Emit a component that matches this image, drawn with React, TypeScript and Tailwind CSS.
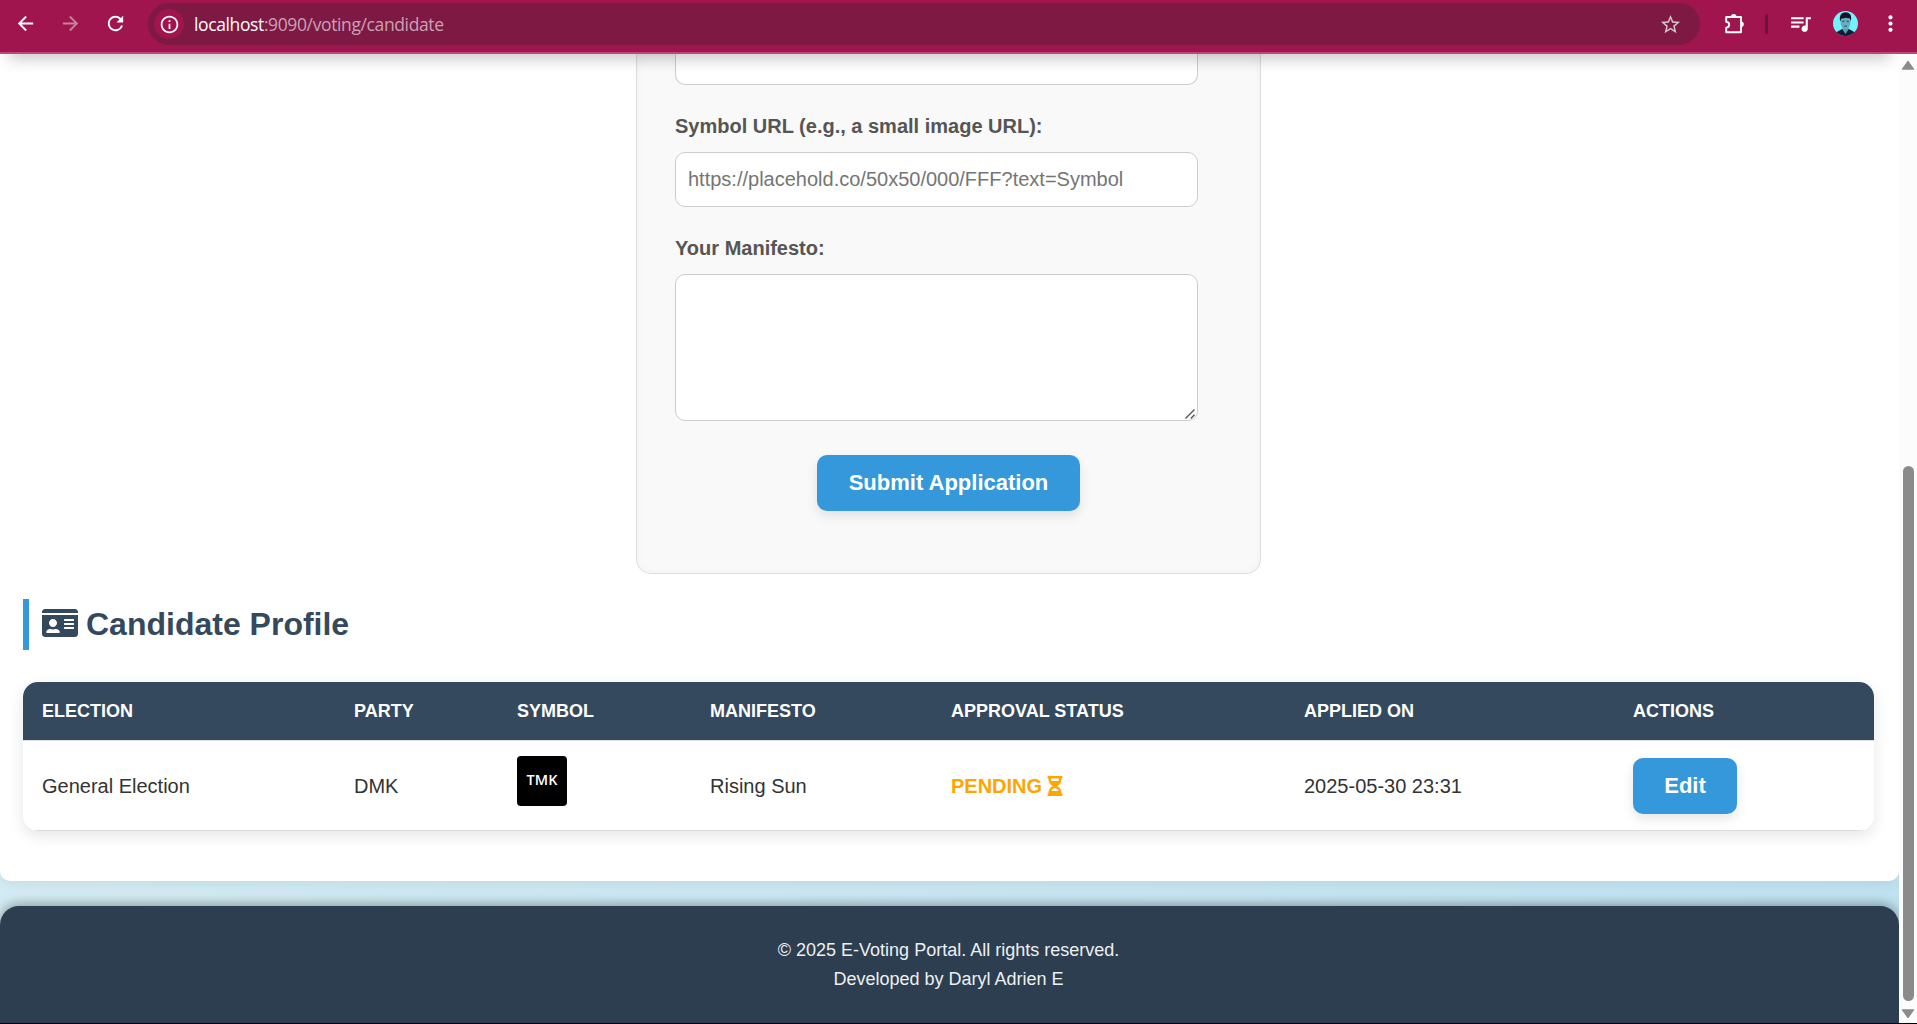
import React from "react";
import { FaHourglassHalf, FaIdCard } from "react-icons/fa";
import { MdArrowBack, MdArrowForward, MdRefresh, MdStarOutline, MdQueueMusic, MdMoreVert, MdOutlineInfo } from "react-icons/md";

const HEADERS: [string, string][] = [
  ["ELECTION", "w-[312px]"],
  ["PARTY", "w-[163px]"],
  ["SYMBOL", "w-[193px]"],
  ["MANIFESTO", "w-[241px]"],
  ["APPROVAL STATUS", "w-[353px]"],
  ["APPLIED ON", "w-[329px]"],
  ["ACTIONS", "w-[260px]"],
];

function ExtensionIcon() {
  return (
    <svg width="22" height="22" viewBox="0 0 22 22" fill="none">
      <path d="M2.2 4H17V19.2H2.2V14.6C6.2 14.2 6.2 9.2 2.2 8.8Z" stroke="white" strokeWidth="1.9" strokeLinejoin="round" />
      <path d="M6.9 3.9A2.8 2.8 0 0 1 12.5 3.9ZM17 8.4A2.8 2.8 0 0 1 17 14Z" fill="white" />
    </svg>
  );
}

function Avatar() {
  return (
    <svg width="25" height="25" viewBox="0 0 25 25">
      <defs><clipPath id="face"><circle cx="12.5" cy="12.5" r="12.5" /></clipPath></defs>
      <g clipPath="url(#face)">
        <rect width="25" height="25" fill="#72f3fb" />
        <path d="M3 25V21.5L9 18H16L22 21.5V25Z" fill="#101b35" />
        <path d="M9.5 15H15.5V18.5L12.5 23L9.5 18.5Z" fill="#5b9fb4" />
        <ellipse cx="12.5" cy="11.8" rx="4.9" ry="6.4" fill="#6aacbf" />
        <path d="M7.2 10.5C6 5 8 1.5 12.5 1.3C17.5 1.3 19 5 17.8 10.5L16.9 7.5L13 6.7L8.4 7.7Z" fill="#101426" />
        <path d="M9.2 10.3H11.4M13.6 10.3H15.8M11.2 15.2H13.8" stroke="#1d3a52" strokeWidth="0.9" />
      </g>
    </svg>
  );
}

export default function App() {
  return (
    <div className="flex h-[1024px] w-[1917px] flex-col overflow-hidden bg-black font-['Liberation_Sans',Arial,sans-serif] text-xl text-[#333]">
      <header className="flex h-[54px] shrink-0 items-start border-b-2 border-[#b84a76] bg-[#a0154e] text-white">
        <div className="flex h-[47px] w-[148px] shrink-0 items-center pl-[14px]">
          <MdArrowBack size={23} />
          <MdArrowForward size={23} className="ml-[22px] opacity-45" />
          <MdRefresh size={23} className="ml-[22px]" />
        </div>
        <div className="mt-[3px] flex h-[42px] w-[1552px] shrink-0 items-center rounded-full bg-[#7d1943] pl-[6px] pr-[18px]">
          <span className="flex size-[30px] items-center justify-center rounded-full bg-[#a0154e]"><MdOutlineInfo size={21} /></span>
          <span className="ml-[10px] font-['Open_Sans',sans-serif] text-[17.5px] tracking-[-0.38px] text-[#cba1b3]"><span className="text-white">localhost</span>:9090/voting/candidate</span>
          <MdStarOutline size={23} className="ml-auto text-[#d4c1ca]" />
        </div>
        <div className="flex h-[47px] flex-1 items-center">
          <span className="ml-[24px]"><ExtensionIcon /></span>
          <span className="ml-[19px] h-5 w-[3px] rounded bg-[#6f1239]" />
          <MdQueueMusic size={25} className="ml-[20px]" />
          <span className="ml-[20px]"><Avatar /></span>
          <MdMoreVert size={25} className="ml-[20px]" />
        </div>
      </header>

      <div className="flex h-[969px] shrink-0">
        <div className="relative flex w-[1899px] flex-col overflow-hidden bg-[linear-gradient(90deg,#d3ebf3,#bfe2f1)]">
          <main className="flex h-[827px] shrink-0 flex-col rounded-b-[10px] bg-white px-[23px] shadow-[0_4px_12px_rgba(0,0,0,0.06)]">
            <section className="ml-[613px] flex h-[520px] w-[625px] shrink-0 flex-col rounded-b-[15px] border border-t-0 border-[#ddd] bg-[#f9f9f9] pl-[38px] shadow-[inset_0_0_10px_rgba(0,0,0,0.03)]">
              <div className="h-[31px] w-[523px] rounded-b-[10px] border border-t-0 border-[#ccc] bg-white" />
              <label className="mt-[26px] h-[31px] font-bold leading-[31px] text-[#555]">Symbol URL (e.g., a small image URL):</label>
              <input className="mt-[10px] h-[55px] w-[523px] shrink-0 rounded-[10px] border border-[#ccc] bg-white px-[12px] placeholder:text-[#757575]" placeholder="https://placehold.co/50x50/000/FFF?text=Symbol" />
              <label className="mt-[26px] h-[31px] font-bold leading-[31px] text-[#555]">Your Manifesto:</label>
              <div className="mt-[10px] flex h-[147px] w-[523px] shrink-0 items-end justify-end rounded-[10px] border border-[#ccc] bg-white pb-px pr-[2px]">
                <svg width="10" height="10" viewBox="0 0 10 10" stroke="#555" strokeWidth="1.4"><path d="M.5 9.5L9.5.5M5.8 9.5L9.5 5.8" /></svg>
              </div>
              <button className="ml-[142px] mt-[34px] h-[56px] w-[263px] shrink-0 rounded-[10px] bg-[#3498db] text-[22px] font-bold text-white shadow-[0_5px_12px_rgba(0,0,0,0.1)]">Submit Application</button>
            </section>
            <h2 className="mt-[25px] flex h-[51px] shrink-0 items-center border-l-[6px] border-[#3498db] pl-[13px] text-[32px] font-bold text-[#34495e]">
              <FaIdCard size={36} className="mb-1 mr-[8px]" />Candidate Profile
            </h2>
            <div className="mt-[32px] h-[149px] w-[1851px] shrink-0 overflow-hidden rounded-[15px] bg-white shadow-[0_5px_15px_rgba(0,0,0,0.1)]">
              <table className="w-full table-fixed border-collapse text-left">
                <thead>
                  <tr className="h-[58px] border-b border-[#ddd] bg-[#34495e] text-[18px] text-white">
                    {HEADERS.map(([h, w]) => <th key={h} className={`${w} pl-[19px] pt-[2px] font-bold`}>{h}</th>)}
                  </tr>
                </thead>
                <tbody>
                  <tr className="h-[90px] border-b border-[#ddd] *:pl-[19px] *:pt-[2px]">
                    <td>General Election</td>
                    <td>DMK</td>
                    <td><span className="mb-[11px] flex size-[50px] items-center justify-center rounded bg-black font-['Open_Sans',sans-serif] text-[14.5px] font-semibold text-white">TMK</span></td>
                    <td>Rising Sun</td>
                    <td><span className="flex items-center font-bold text-[#ffa500]">PENDING<FaHourglassHalf size={20} className="ml-[3px]" /></span></td>
                    <td>2025-05-30 23:31</td>
                    <td><button className="block h-[56px] w-[104px] rounded-[10px] bg-[#3498db] text-[22px] font-bold text-white shadow-[0_5px_12px_rgba(0,0,0,0.1)]">Edit</button></td>
                  </tr>
                </tbody>
              </table>
            </div>
          </main>
          <footer className="mt-[25px] h-[117px] shrink-0 rounded-t-[19px] bg-[#2c3e50] pr-[2px] pt-[30px] text-center text-[18px] leading-[29px] text-[#ecf0f1] shadow-[0_-2px_12px_rgba(0,0,0,0.35)]">
            <p>© 2025 E-Voting Portal. All rights reserved.</p>
            <p>Developed by Daryl Adrien E</p>
          </footer>
          <div className="absolute -top-[20px] left-[9px] right-[9px] h-[20px] shadow-[0_5px_15px_rgba(0,0,0,0.22)]" />
        </div>
        <div className="flex w-[18px] flex-col items-center bg-[#fcfcfc]">
          <svg width="14" height="10" viewBox="0 0 14 10" className="mt-[6px] shrink-0"><path d="M7 1L12.8 9.2H1.2Z" fill="#8b8b8b" stroke="#8b8b8b" strokeLinejoin="round" /></svg>
          <div className="mt-[396px] h-[535px] w-[11px] shrink-0 rounded-full bg-[#8b8b8b]" />
          <svg width="14" height="10" viewBox="0 0 14 10" className="mt-[8px] shrink-0"><path d="M7 9L12.8 .8H1.2Z" fill="#8b8b8b" stroke="#8b8b8b" strokeLinejoin="round" /></svg>
        </div>
      </div>
    </div>
  );
}
